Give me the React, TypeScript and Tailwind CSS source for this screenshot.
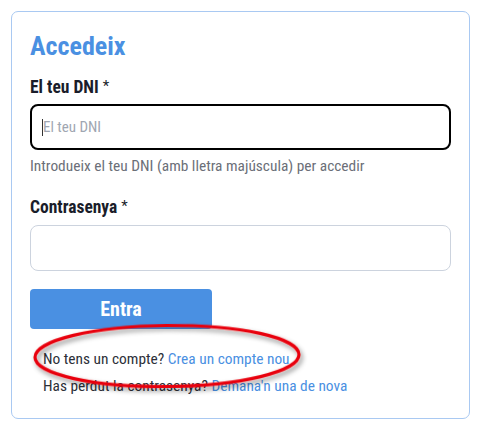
export default function App() {
  return (
    <div className="min-h-[440px] w-[481px] bg-white pl-[11px] pt-[11px] font-['Roboto_Condensed',Roboto,sans-serif]">
      <div className="relative flex h-[408px] w-[459px] flex-col rounded-[7px] border border-[#a9c9f2] px-[18px] pt-[18px]">
        <h1 className="text-[26px] leading-[32px] font-bold text-[#4a90e2]">Accedeix</h1>

        <label className="mt-[14px] text-[17.5px] leading-[22px] font-bold text-[#1a1d2a]">
          El teu DNI <span className="align-top text-[15px] leading-[20px] font-normal">*</span>
        </label>
        <div className="mt-[6px] flex h-[46px] items-center rounded-[8px] border-2 border-black px-[10px]">
          <span className="h-[17px] w-px bg-[#333]" />
          <span className="text-[15px] text-[#a0a6b1]">El teu DNI</span>
        </div>
        <p className="mt-[6px] text-[15.4px] leading-[20px] text-[#6b6f78]">
          Introdueix el teu DNI (amb lletra majúscula) per accedir
        </p>

        <label className="mt-[20px] text-[17.5px] leading-[22px] font-bold text-[#1a1d2a]">
          Contrasenya <span className="align-top text-[15px] leading-[20px] font-normal">*</span>
        </label>
        <div className="mt-[7px] h-[46px] rounded-[8px] border border-[#ccd3de]" />

        <button className="mt-[18px] h-[40px] w-[182px] rounded-[4px] bg-[#4a90e2] text-[20px] font-bold text-white">
          Entra
        </button>

        <div className="mt-[20px] flex flex-col gap-[7px] pl-[13px] text-[15.4px] leading-[20px] text-[#2d3038]">
          <p>
            No tens un compte? <span className="text-[#4a90e2]">Crea un compte nou</span>
          </p>
          <p>
            Has perdut la contrasenya? <span className="text-[#4a90e2]">Demana'n una de nova</span>
          </p>
        </div>

        <svg className="pointer-events-none absolute left-[10px] top-[300px]" width="300" height="90" viewBox="0 0 300 90">
          <defs>
            <filter id="sh" x="-20%" y="-40%" width="140%" height="180%">
              <feDropShadow dx="2" dy="3" stdDeviation="2.5" floodColor="#000" floodOpacity="0.45" />
            </filter>
          </defs>
          <ellipse cx="145" cy="44" rx="132" ry="30.5" fill="none" stroke="#e8000b" strokeWidth="3.2" filter="url(#sh)" transform="rotate(-0.6 145 44)" />
        </svg>
      </div>
    </div>
  );
}
